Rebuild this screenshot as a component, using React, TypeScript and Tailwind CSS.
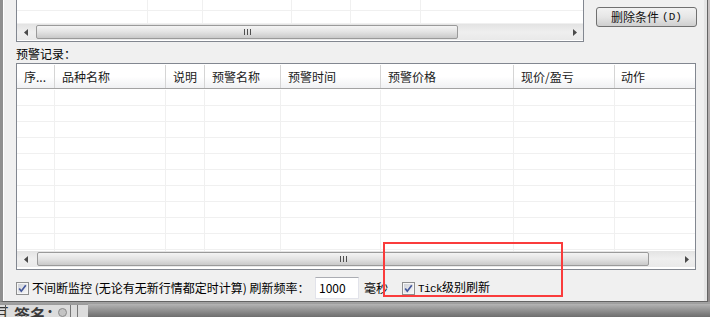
import React from "react"

const topCols = ["w-[131px]", "w-[55px]", "w-[89px]", "w-[59px]", "w-[70px]"]

const headCols = [
    {w: "w-[38px]", label: "序..."},
    {w: "w-[111px]", label: "品种名称"},
    {w: "w-[39px]", label: "说明"},
    {w: "w-[76px]", label: "预警名称"},
    {w: "w-[100px]", label: "预警时间"},
    {w: "w-[133px]", label: "预警价格"},
    {w: "w-[101px]", label: "现价/盈亏"},
]

function Arrow({dir}: { dir: "left" | "right" }) {
    return (
        <div className="w-[17px] h-full flex items-center justify-center shrink-0">
            <svg width="4" height="7" viewBox="0 0 4 7">
                {dir === "left"
                    ? <polygon points="4,0 4,7 0,3.5" fill="#4a4a4a"/>
                    : <polygon points="0,0 0,7 4,3.5" fill="#4a4a4a"/>}
            </svg>
        </div>
    )
}

function Grip() {
    return (
        <div className="flex gap-[2px]">
            <span className="w-px h-[6px] bg-[#4f4f4f]"/>
            <span className="w-px h-[6px] bg-[#4f4f4f]"/>
            <span className="w-px h-[6px] bg-[#4f4f4f]"/>
        </div>
    )
}

function ScrollBar({thumbClass}: { thumbClass: string }) {
    return (
        <div className="h-[16px] flex bg-gradient-to-b from-[#e3e3e3] via-[#efefef] to-[#e9e9e9]">
            <Arrow dir="left"/>
            <div className="flex-1 flex py-px">
                <div
                    className={thumbClass + " h-full rounded-[2px] border border-[#9a9a9a] bg-gradient-to-b from-[#f4f4f4] via-[#e3e3e3] to-[#c9c9c9] flex items-center justify-center"}>
                    <Grip/>
                </div>
            </div>
            <Arrow dir="right"/>
        </div>
    )
}

function CheckBox() {
    return (
        <svg width="13" height="13" viewBox="0 0 13 13" className="shrink-0">
            <defs>
                <linearGradient id="cbg" x1="0" y1="0" x2="1" y2="1">
                    <stop offset="0" stopColor="#cfd2d8"/>
                    <stop offset="1" stopColor="#f7f7f7"/>
                </linearGradient>
            </defs>
            <rect x="0.5" y="0.5" width="12" height="12" fill="#f6f6f6" stroke="#8e8f8f"/>
            <rect x="2" y="2" width="9" height="9" fill="url(#cbg)"/>
            <path d="M3.2 6.4 L5.3 9.2 L9.8 3.2" fill="none" stroke="#44579a" strokeWidth="1.7"/>
        </svg>
    )
}

function TopList() {
    const rows = ["h-[11px]", "h-[13px]"]
    return (
        <div className="w-[568px] h-[42px] border-x border-b border-[#828790] bg-white flex flex-col">
            {rows.map((h, i) => (
                <div key={i} className={h + " flex border-b border-[#f0f0f0]"}>
                    {topCols.map((w, j) => (
                        <div key={j} className={w + " h-full border-r border-[#f0f0f0]"}/>
                    ))}
                    <div className="flex-1"/>
                </div>
            ))}
            <ScrollBar thumbClass="ml-[2px] w-[422px]"/>
        </div>
    )
}

function BottomList() {
    const rows = Array.from({length: 11})
    return (
        <div className="w-[680px] h-[207px] border border-[#828790] bg-white pt-px pb-[2px] flex flex-col">
            <div
                className="h-[24px] flex border-b border-[#a3a3a3] bg-gradient-to-b from-white via-white to-[#f0f1f3] shrink-0">
                {headCols.map((c) => (
                    <div key={c.label}
                         className={c.w + " h-full border-r border-[#d5d5d5] pl-[7px] flex items-center leading-[16px] text-[#1a1a1a] whitespace-nowrap"}>
                        {c.label}
                    </div>
                ))}
                <div className="flex-1 pl-[6px] flex items-center leading-[16px] text-[#1a1a1a]">动作</div>
            </div>
            <div className="h-[162px] pt-px overflow-hidden shrink-0">
                {rows.map((_, i) => (
                    <div key={i} className="h-[16px] flex border-b border-[#f0f0f0]">
                        {headCols.map((c) => (
                            <div key={c.label} className={c.w + " h-full border-r border-[#f0f0f0]"}/>
                        ))}
                        <div className="flex-1"/>
                    </div>
                ))}
            </div>
            <ScrollBar thumbClass="ml-[3px] w-[612px]"/>
        </div>
    )
}

export default function App() {
    return (
        <div
            className="relative w-[710px] h-[317px] overflow-hidden bg-gradient-to-b from-[#c9c4c4] to-[#8c8888] text-[12px] text-black font-['Noto_Sans_CJK_SC','Noto_Sans_CJK_JP',sans-serif]">
            <div className="w-[708px] h-[302px] border-l-[3px] border-l-[#8f8f8f] border-r border-b border-[#646464] bg-[#f0f0f0]">
                <div className="h-full border-l border-white border-r-[3px] border-r-[#e4e4e4] pl-[12px] flex flex-col">
                    <div className="flex h-[42px] shrink-0">
                        <TopList/>
                        <div className="pl-[12px] pt-[7px]">
                            <button type="button"
                                    className="w-[101px] h-[20px] rounded-[3px] border border-[#707070] bg-gradient-to-b from-[#f2f2f2] via-[#e6e6e6] to-[#cfcfcf] flex items-center justify-center leading-[16px] text-[#111]">
                                删除条件
                                <span className="ml-[3px] font-['Liberation_Mono',monospace] text-[11px]">(D)</span>
                            </button>
                        </div>
                    </div>
                    <div className="h-[21px] pt-[4px] leading-[16px] shrink-0">预警记录：</div>
                    <BottomList/>
                    <div className="mt-[7px] h-[22px] flex items-center shrink-0">
                        <CheckBox/>
                        <span className="ml-[3px] w-[278px] whitespace-nowrap leading-[16px]">不间断监控 (无论有无新行情都定时计算) 刷新频率：</span>
                        <div
                            className="ml-[5px] w-[44px] h-[22px] bg-white border border-[#e2e3ea] border-t-[#abadb3] pl-[3px] flex items-center leading-[16px]">
                            1000
                        </div>
                        <span className="ml-[5px] w-[24px] whitespace-nowrap leading-[16px]">毫秒</span>
                        <div className="ml-[14px] flex items-center">
                            <CheckBox/>
                            <span className="ml-[3px] leading-[16px] whitespace-nowrap">
                                <span className="font-['Liberation_Mono',monospace] text-[11px] tracking-[-0.6px]">Tick</span>级别刷新
                            </span>
                        </div>
                    </div>
                </div>
            </div>
            <div className="h-[15px] flex bg-gradient-to-b from-[#a3a3a3] via-[#8a8a8a] to-[#6a6a6a]">
                <div className="mt-[3px] w-[88px] h-[12px] bg-[#dcdcdc] flex overflow-hidden">
                    <div className="w-[9px] -ml-[7px] leading-[16px] text-[16px] text-[#333]">亘</div>
                    <div className="ml-[3px] w-px h-full bg-[#555]"/>
                    <div className="ml-[8px] mt-[1px] leading-[16px] text-[16px] font-bold text-[#3a3a3a] whitespace-nowrap">签名：</div>
                    <div className="-ml-[4px] mt-[3px] w-[9px] h-[9px] rounded-full border border-[#8a8a8a] bg-[#c4c4c4]"/>
                    <div className="ml-[3px] w-px h-full bg-[#777]"/>
                    <div className="ml-[6px] w-px h-full bg-[#777]"/>
                </div>
                <div className="flex-1 mt-[2px] bg-gradient-to-b from-[#b4b4b4] to-[#6e6e6e]"/>
            </div>
            <div className="absolute left-[383px] top-[242px] w-[180px] h-[55px] border-2 border-[#fa3c3c]"/>
        </div>
    )
}
